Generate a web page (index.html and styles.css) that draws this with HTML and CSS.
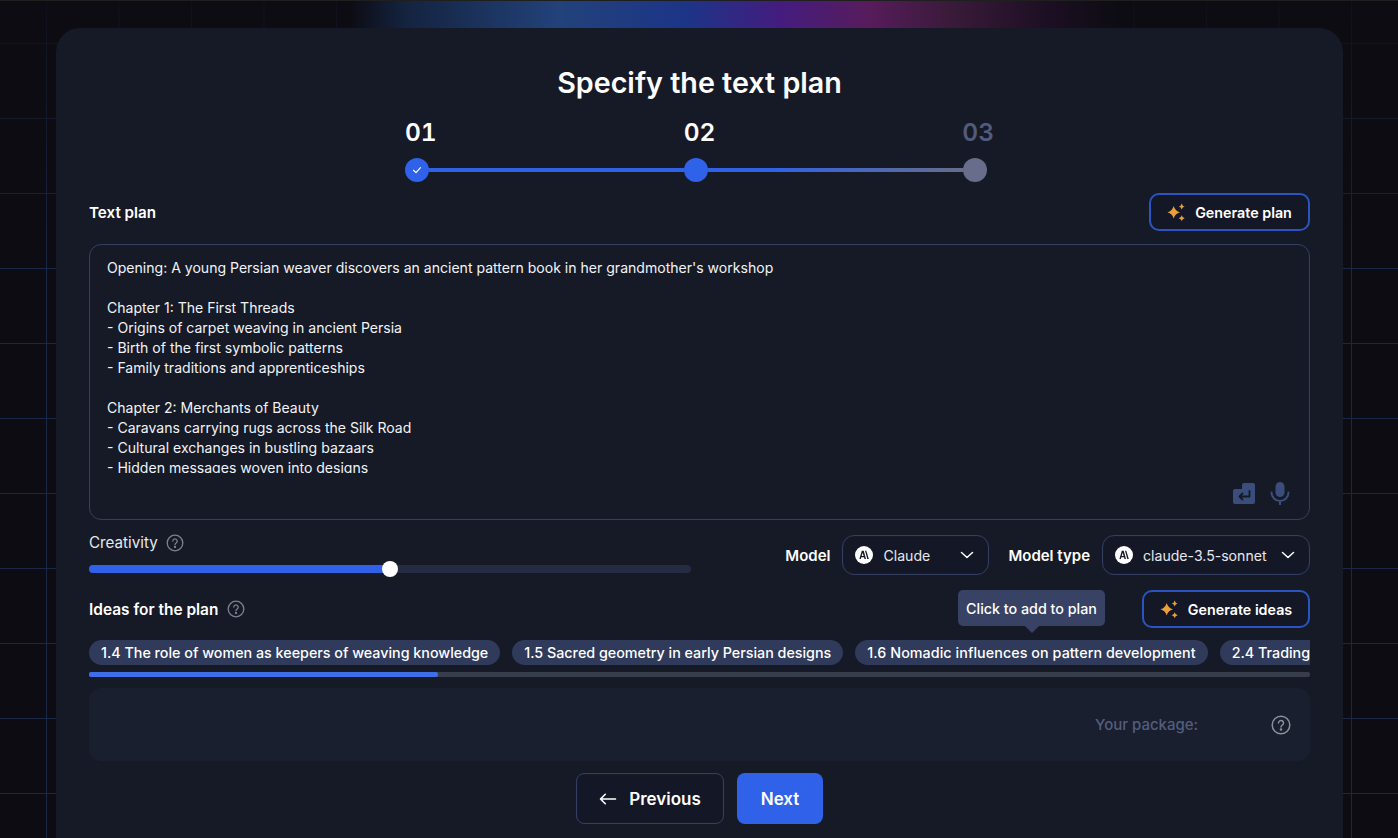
FILE: index.html
```html
<!DOCTYPE html>
<html lang="en">
<head>
  <meta charset="UTF-8">
  <meta name="viewport" content="width=device-width, initial-scale=1.0">
  <title>Specify the text plan</title>
  <link rel="stylesheet" href="styles.css">
</head>
<body>
  <main class="card">
    <h1>Specify the text plan</h1>

    <div class="stepper">
      <div class="step-labels">
        <span>01</span>
        <span>02</span>
        <span class="muted">03</span>
      </div>
      <div class="step-track">
        <span class="dot done">
          <svg viewBox="0 0 12 12" width="12" height="12" fill="none" stroke="#fff" stroke-width="1.2" stroke-linecap="round" stroke-linejoin="round"><path d="M2.5 6.3 5 8.6 9.5 3.6"/></svg>
        </span>
        <span class="line"></span>
        <span class="dot"></span>
        <span class="line fade"></span>
        <span class="dot todo"></span>
      </div>
    </div>

    <div class="row plan-head">
      <label class="label">Text plan</label>
      <button class="btn-outline btn-plan">
        <svg viewBox="0 0 18 18" width="18" height="18" fill="#ec9f36"><path d="M6.7 2.900Q8 7.900 13 9.200 8 10.500 6.700 15.500 5.400 10.500.4 9.200 5.400 7.900 6.700 2.900z"/><path d="M14.700.5Q15.200 3 17.700 3.500 15.200 4 14.700 6.500 14.200 4 11.700 3.500 14.200 3 14.700.5z"/><path d="M14.700 12.200Q15.200 14.700 17.700 15.200 15.200 15.700 14.700 18.200 14.200 15.700 11.700 15.200 14.200 14.700 14.700 12.200z"/></svg>
        Generate plan
      </button>
    </div>

    <div class="plan-box">
      <div class="plan-text">Opening: A young Persian weaver discovers an ancient pattern book in her grandmother's workshop

Chapter 1: The First Threads
- Origins of carpet weaving in ancient Persia
- Birth of the first symbolic patterns
- Family traditions and apprenticeships

Chapter 2: Merchants of Beauty
- Caravans carrying rugs across the Silk Road
- Cultural exchanges in bustling bazaars
- Hidden messages woven into designs</div>
      <div class="plan-tools">
        <svg viewBox="0 0 24 24" width="24" height="24"><path fill="#3b4d7c" d="M12 2h9a2 2 0 0 1 2 2v17a2 2 0 0 1-2 2H3a2 2 0 0 1-2-2V10a2 2 0 0 1 2-2h7V4a2 2 0 0 1 2-2z"/><path fill="none" stroke="#151a26" stroke-width="1.800" stroke-linecap="round" stroke-linejoin="round" d="M17.500 10v5.500H7.500M10.500 12.500l-3 3 3 3"/></svg>
        <svg viewBox="0 0 24 24" width="24" height="24"><path fill="#3b4d7c" d="M12 1a4.500 4.500 0 0 0-4.500 4.500v6a4.500 4.500 0 0 0 9 0v-6A4.500 4.500 0 0 0 12 1z"/><path fill="none" stroke="#3b4d7c" stroke-width="2" stroke-linecap="round" d="M3.500 11.500a8.500 8.500 0 0 0 17 0M12 20v3.500"/></svg>
      </div>
    </div>

    <div class="row settings">
      <div class="creativity">
        <div class="label-help">
          <span class="label-thin">Creativity</span>
          <svg viewBox="0 0 18 18" width="18" height="18" fill="none" stroke="#7d8290" stroke-width="1.300"><circle cx="9" cy="9" r="7.800"/><path stroke-linecap="round" d="M6.800 7.100a2.200 2.200 0 1 1 3.400 1.900c-.8.500-1.200.9-1.200 1.700"/><circle cx="9" cy="13" r=".5" fill="#7d8290"/></svg>
        </div>
        <div class="slider">
          <div class="slider-fill"></div>
          <div class="slider-thumb"></div>
        </div>
      </div>
      <div class="selects">
        <span class="label select-label">Model</span>
        <div class="select select-model">
          <span class="logo">
            <svg viewBox="0 0 18 18" width="18" height="18"><circle cx="9" cy="9" r="9" fill="#fff"/><path fill="#151a26" d="M6.800 4.800h1.900L11 13H9.500L9 11.200H6.300L5.800 13H4.400zM7.700 6.700 6.700 9.900H8.600zM10 4.800h1.300L13.800 13h-1.500z"/></svg>
          </span>
          <span class="select-text">Claude</span>
          <svg viewBox="0 0 14 8" width="14" height="8" fill="none" stroke="#fff" stroke-width="1.500" stroke-linecap="round" stroke-linejoin="round"><path d="M1.500 1.500 7 6.500 12.500 1.500"/></svg>
        </div>
        <span class="label select-label">Model type</span>
        <div class="select select-type">
          <span class="logo">
            <svg viewBox="0 0 18 18" width="18" height="18"><circle cx="9" cy="9" r="9" fill="#fff"/><path fill="#151a26" d="M6.800 4.800h1.900L11 13H9.500L9 11.200H6.300L5.800 13H4.400zM7.700 6.700 6.700 9.900H8.600zM10 4.800h1.300L13.800 13h-1.500z"/></svg>
          </span>
          <span class="select-text">claude-3.5-sonnet</span>
          <svg viewBox="0 0 14 8" width="14" height="8" fill="none" stroke="#fff" stroke-width="1.500" stroke-linecap="round" stroke-linejoin="round"><path d="M1.500 1.500 7 6.500 12.500 1.500"/></svg>
        </div>
      </div>
    </div>

    <div class="row ideas-head">
      <div class="label-help ideas-label">
        <span class="label">Ideas for the plan</span>
        <svg viewBox="0 0 18 18" width="18" height="18" fill="none" stroke="#7d8290" stroke-width="1.300"><circle cx="9" cy="9" r="7.800"/><path stroke-linecap="round" d="M6.800 7.100a2.200 2.200 0 1 1 3.400 1.900c-.8.500-1.200.9-1.200 1.700"/><circle cx="9" cy="13" r=".5" fill="#7d8290"/></svg>
      </div>
      <button class="btn-outline btn-ideas">
        <svg viewBox="0 0 18 18" width="18" height="18" fill="#ec9f36"><path d="M6.7 2.900Q8 7.900 13 9.200 8 10.500 6.700 15.500 5.400 10.500.4 9.200 5.400 7.900 6.700 2.900z"/><path d="M14.700.5Q15.200 3 17.700 3.500 15.200 4 14.700 6.500 14.200 4 11.700 3.500 14.200 3 14.700.5z"/><path d="M14.700 12.200Q15.200 14.700 17.700 15.200 15.200 15.700 14.700 18.200 14.200 15.700 11.700 15.200 14.200 14.700 14.700 12.200z"/></svg>
        Generate ideas
      </button>
    </div>

    <div class="ideas">
      <div class="tooltip">Click to add to plan</div>
      <div class="chips">
        <span class="chip">1.4 The role of women as keepers of weaving knowledge</span>
        <span class="chip">1.5 Sacred geometry in early Persian designs</span>
        <span class="chip chip-wide">1.6 Nomadic influences on pattern development</span>
        <span class="chip">2.4 Trading routes and the spread of motifs</span>
      </div>
      <div class="scrollbar"><div class="scrollbar-thumb"></div></div>
    </div>

    <div class="package">
      <span class="package-label">Your package:</span>
      <svg viewBox="0 0 20 20" width="20" height="20" fill="none" stroke="#8b8f9b" stroke-width="1.500"><circle cx="10" cy="10" r="8.800"/><path stroke-linecap="round" d="M7.500 7.900a2.500 2.500 0 1 1 3.900 2.100c-.9.600-1.400 1-1.400 1.900"/><circle cx="10" cy="14.500" r=".6" fill="#8b8f9b"/></svg>
    </div>

    <div class="nav">
      <button class="btn-prev">
        <svg viewBox="0 0 18 12" width="18" height="12" fill="none" stroke="#fff" stroke-width="1.600" stroke-linecap="round" stroke-linejoin="round"><path d="M16.500 6H1.500M6.300 1.300 1.500 6l4.800 4.700"/></svg>
        Previous
      </button>
      <button class="btn-next">Next</button>
    </div>
  </main>
</body>
</html>
```

FILE: styles.css
```css
* {
  box-sizing: border-box;
}
body {
  margin: 0;
  height: 838px;
  overflow: hidden;
  padding: 28px 55px 0 56px;
  font-family: Inter, "Noto Sans", sans-serif;
  color: #fff;
  background-color: #0d0c13;
  background-image:
    linear-gradient(#201f20, #201f20),
    linear-gradient(90deg, transparent 25%, #14233f 29%, #22427a 40%, #1c3587 49%, #451c7e 56%, #571c5c 62%, #3a1a3a 68%, #1c0f22 75%, transparent 80%),
    linear-gradient(rgba(13, 12, 19, 0.85), rgba(13, 12, 19, 0.5) 118px, transparent 268px),
    linear-gradient(#1b2747 1px, transparent 1px),
    linear-gradient(90deg, #1b2747 1px, transparent 1px);
  background-size: 100% 1px, 100% 28px, 100% 100%, 72.5px 75px, 72.5px 75px;
  background-position: 0 0, 0 0, 0 0, 0 43px, 46px 0;
  background-repeat: no-repeat, no-repeat, no-repeat, repeat, repeat;
}
.card {
  height: 100%;
  padding: 33px 33px 0;
  background: #151a26;
  border-radius: 24px 24px 0 0;
}
h1 {
  margin: 0;
  font-size: 28.7px;
  line-height: 44px;
  font-weight: 600;
  text-align: center;
}
.stepper {
  width: 589px;
  margin: 12px auto 0;
}
.step-labels {
  display: flex;
  justify-content: space-between;
  font-size: 24.5px;
  font-variant-numeric: tabular-nums;
  line-height: 30px;
  font-weight: 600;
}
.muted {
  color: #525b7b;
}
.step-track {
  display: flex;
  align-items: center;
  margin-top: 11px;
  width: 582px;
}
.dot {
  flex: none;
  width: 24px;
  height: 24px;
  border-radius: 50%;
  background: #2f62e8;
  display: flex;
  align-items: center;
  justify-content: center;
}
.dot.todo {
  background: #676d8a;
}
.line {
  flex: 1;
  height: 4px;
  background: #2f62e8;
}
.line.fade {
  background: linear-gradient(90deg, #2f62e8 25%, #676d8a 100%);
}
.row {
  display: flex;
  justify-content: space-between;
  align-items: center;
}
.plan-head {
  margin-top: 11px;
}
.label {
  font-size: 15.2px;
  font-weight: 600;
}
.label-thin {
  font-size: 15.2px;
  color: #e6e8ee;
}
button {
  font-family: inherit;
  color: #fff;
  cursor: pointer;
}
.btn-outline {
  display: flex;
  align-items: center;
  justify-content: center;
  gap: 10px;
  height: 38px;
  background: #141826;
  border: 2px solid #2a55c0;
  border-radius: 10px;
  font-size: 14.3px;
  font-weight: 600;
}
.btn-plan {
  width: 161px;
}
.btn-ideas {
  width: 168px;
}
.plan-box {
  margin-top: 13px;
  height: 276px;
  border: 1px solid #333e60;
  box-shadow: inset 0 0 1px #2b3553;
  border-radius: 12px;
  padding: 13px 17px 0;
}
.plan-text {
  height: 215px;
  overflow: hidden;
  white-space: pre-wrap;
  font-size: 14.05px;
  line-height: 20px;
  color: #f2f3f6;
}
.plan-tools {
  display: flex;
  justify-content: flex-end;
  gap: 12px;
  padding-top: 8px;
}
.settings {
  margin-top: 13px;
  align-items: flex-start;
}
.creativity {
  width: 602px;
}
.label-help {
  display: flex;
  align-items: center;
  gap: 8px;
}
.slider {
  position: relative;
  height: 8px;
  margin-top: 13px;
  border-radius: 4px;
  background: #252b42;
}
.slider-fill {
  width: 50%;
  height: 100%;
  border-radius: 4px;
  background: #2f62e8;
}
.slider-thumb {
  position: absolute;
  left: 293px;
  top: -4px;
  width: 16px;
  height: 16px;
  border-radius: 50%;
  background: #fff;
}
.selects {
  display: flex;
  align-items: center;
  margin-top: 2px;
}
.select-label {
  font-size: 15px;
}
.select {
  display: flex;
  align-items: center;
  height: 40px;
  margin-left: 12px;
  padding: 0 14px 0 12px;
  border: 1px solid #333e60;
  box-shadow: inset 0 0 1px #2b3553;
  border-radius: 12px;
  background: #141826;
  font-size: 14.1px;
  color: #e6e8ee;
}
.select-model {
  width: 147px;
  margin-right: 19px;
}
.select-type {
  width: 208px;
}
.logo {
  display: flex;
  margin-right: 10px;
}
.select-text {
  flex: 1;
}
.ideas-head {
  margin-top: 15px;
}
.ideas-label {
  gap: 9px;
}
.ideas-label .label {
  font-size: 15.44px;
}
.ideas {
  position: relative;
  margin-top: 12px;
}
.tooltip {
  position: absolute;
  left: 869px;
  top: -50px;
  width: 147px;
  height: 36px;
  display: flex;
  align-items: center;
  justify-content: center;
  border-radius: 5px;
  background: #374264;
  font-size: 14.3px;
  font-weight: 500;
  white-space: nowrap;
}
.tooltip::after {
  content: "";
  position: absolute;
  left: 67px;
  bottom: -7px;
  border-left: 7px solid transparent;
  border-right: 7px solid transparent;
  border-top: 7px solid #374264;
}
.chips {
  display: flex;
  gap: 12px;
  overflow: hidden;
}
.chip {
  flex: none;
  height: 25px;
  padding: 0 12px;
  display: flex;
  align-items: center;
  border-radius: 13px;
  background: #303a5a;
  font-size: 14.3px;
  font-weight: 500;
  white-space: nowrap;
}
.chip-wide {
  letter-spacing: 0.07px;
}
.scrollbar {
  height: 5px;
  margin-top: 7px;
  border-radius: 2px;
  background: #383d4b;
}
.scrollbar-thumb {
  width: 349px;
  height: 100%;
  border-radius: 2px;
  background: #3e6ee8;
}
.package {
  display: flex;
  align-items: center;
  height: 73px;
  margin-top: 11px;
  padding-right: 19px;
  border-radius: 12px;
  background: #191f2f;
}
.package-label {
  margin-left: auto;
  width: 176px;
  font-size: 15px;
  font-weight: 500;
  color: #535d7c;
}
.nav {
  display: flex;
  justify-content: center;
  gap: 13px;
  margin-top: 12px;
}
.btn-prev {
  display: flex;
  align-items: center;
  justify-content: center;
  gap: 12px;
  width: 148px;
  height: 51px;
  background: #141826;
  border: 1px solid #333e60;
  box-shadow: inset 0 0 1px #2b3553;
  border-radius: 8px;
  font-size: 17px;
  font-weight: 600;
}
.btn-next {
  width: 86px;
  height: 51px;
  border: none;
  border-radius: 8px;
  background: #2f62e8;
  font-size: 17px;
  font-weight: 600;
}
```
